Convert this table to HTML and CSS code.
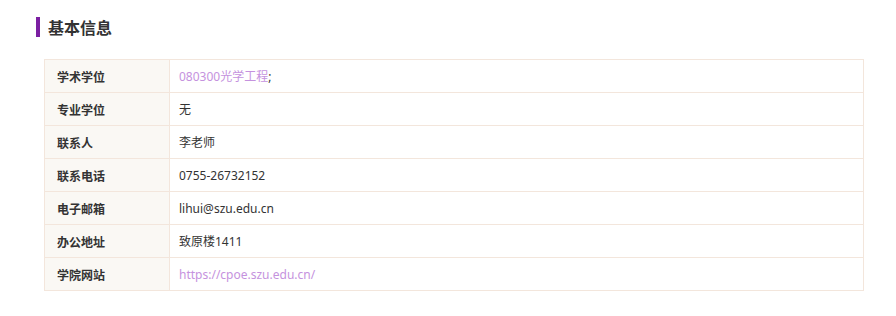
FILE: index.html
```html
<!DOCTYPE html>
<html lang="zh-CN">
<head>
<meta charset="utf-8">
<title>基本信息</title>
<link rel="stylesheet" href="styles.css">
</head>
<body>
<section class="info">
  <h2 class="info-title">基本信息</h2>
  <table class="info-table">
    <tr><th>学术学位</th><td><a class="link" href="#">080300光学工程</a>;</td></tr>
    <tr><th>专业学位</th><td>无</td></tr>
    <tr><th>联系人</th><td>李老师</td></tr>
    <tr><th>联系电话</th><td>0755-26732152</td></tr>
    <tr><th>电子邮箱</th><td>lihui@szu.edu.cn</td></tr>
    <tr><th>办公地址</th><td>致原楼1411</td></tr>
    <tr><th>学院网站</th><td><a class="link" href="#">https://cpoe.szu.edu.cn/</a></td></tr>
  </table>
</section>
</body>
</html>
```
FILE: styles.css
```css
html, body {
  margin: 0;
  padding: 0;
  background: #ffffff;
}
body {
  font-family: "Noto Sans CJK SC", "Noto Sans", "Liberation Sans", sans-serif;
  color: #333333;
}
.info {
  padding: 17px 32px 0 36px;
}
.info-title {
  margin: 0;
  font-size: 16px;
  font-weight: bold;
  line-height: 20px;
  color: #333333;
  border-left: 4px solid #7b1fa2;
  padding-left: 8px;
  height: 20px;
}
.info-table {
  margin: 22px 0 0 8px;
  width: 820px;
  border-collapse: collapse;
  font-size: 12px;
}
.info-table th,
.info-table td {
  border: 1px solid #f3e6dc;
  height: 32px;
  padding: 0 12px;
  text-align: left;
  vertical-align: middle;
}
.info-table th {
  width: 100px;
  background: #faf8f4;
  font-weight: bold;
  color: #333333;
}
.info-table td {
  padding-left: 9px;
  color: #333333;
  font-family: "Noto Sans", "Noto Sans CJK SC", sans-serif;
}
.link {
  color: #c592de;
  text-decoration: none;
}
```
